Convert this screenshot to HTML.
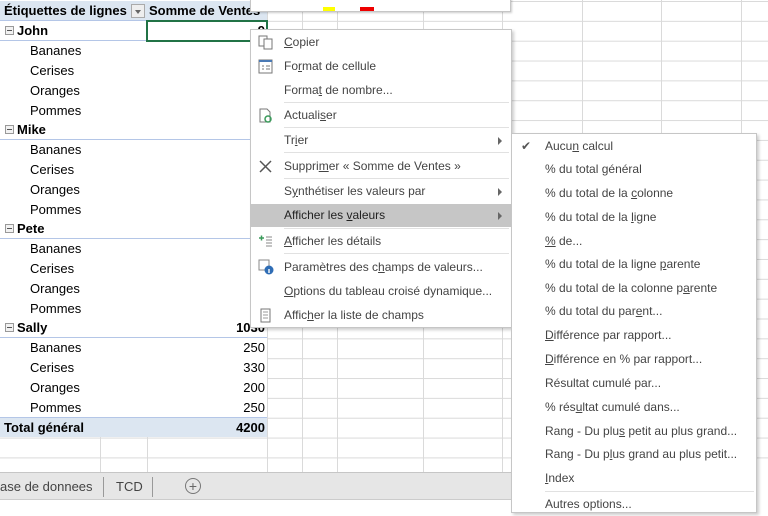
<!DOCTYPE html>
<html><head><meta charset="utf-8"><style>
*{margin:0;padding:0;box-sizing:border-box}
body{width:768px;height:504px;overflow:hidden;background:#fff;font-family:"Liberation Sans",sans-serif;position:relative}
.grid{position:absolute;left:0;top:0;width:768px;height:472px;
background-image:linear-gradient(#dadada 1px,transparent 1px);background-size:100% 19.85px;background-position:0 1px}
.v{position:absolute;top:0;width:1px;height:472px;background:#dadada}
.pt{position:absolute;left:0;top:0;width:267px;background:#fff}
.r{position:absolute;left:0;width:267px;height:19.85px;font-size:13px;line-height:19px;color:#000}
.r .a{position:absolute;left:30px}
.r .b{position:absolute;right:2px}
.r.g .a{left:17px;font-weight:bold}.r.g .b{font-weight:bold}
.r.g{border-bottom:1px solid #b4c6e7}
.mn{position:absolute;left:5px;top:5px;width:9px;height:9px;border:1px solid #999;background:#f2f2f2}
.mn:after{content:"";position:absolute;left:1px;top:3px;width:5px;height:1px;background:#555}
.menu{position:absolute;background:#fff;border:1px solid #c6c6c6;box-shadow:2px 2px 3px rgba(0,0,0,.2);font-size:12px;color:#444}
.it{position:absolute;left:0;right:0;height:23px;line-height:23px}
.it span{position:absolute;left:33px}
.sep{position:absolute;left:33px;right:2px;height:1px;background:#e1e1e1}
.arr{position:absolute;right:9px;top:8px;border-left:4px solid #666;border-top:4px solid transparent;border-bottom:4px solid transparent}
u{text-decoration:underline}
</style></head><body>
<div class="grid"></div>
<div class="v" style="left:267px"></div><div class="v" style="left:302px"></div><div class="v" style="left:337px"></div><div class="v" style="left:423px"></div><div class="v" style="left:502px"></div><div class="v" style="left:582px"></div><div class="v" style="left:661px"></div><div class="v" style="left:741px"></div>
<div class="v" style="left:100px;top:437px;height:35px"></div><div class="v" style="left:147px;top:437px;height:35px"></div>

<div class="pt" style="height:437px">
<div class="r" style="top:1px;background:#dce6f1;font-weight:bold;border-bottom:1px solid #b4c6e7"><span style="position:absolute;left:4px">Étiquettes de lignes</span><span style="position:absolute;left:131px;top:3px;width:14px;height:14px;border:1px solid #aaa;background:#eee"></span><span style="position:absolute;left:135px;top:9px;border-top:4px solid #666;border-left:3px solid transparent;border-right:3px solid transparent"></span><span style="position:absolute;left:149px">Somme de Ventes</span></div>
<div class="r g" style="top:21px"><i class="mn"></i><span class="a">John</span><span class="b">9</span></div>
<div style="position:absolute;left:146px;top:20px;width:122px;height:22px;border:2px solid #217346"></div>
<div class="r" style="top:41px"><span class="a">Bananes</span><span class="b">4</span></div>
<div class="r" style="top:61px"><span class="a">Cerises</span><span class="b">2</span></div>
<div class="r" style="top:81px"><span class="a">Oranges</span><span class="b">1</span></div>
<div class="r" style="top:101px"><span class="a">Pommes</span><span class="b">1</span></div>
<div class="r g" style="top:120px"><i class="mn"></i><span class="a">Mike</span><span class="b">13</span></div>
<div class="r" style="top:140px"><span class="a">Bananes</span><span class="b">2</span></div>
<div class="r" style="top:160px"><span class="a">Cerises</span><span class="b">5</span></div>
<div class="r" style="top:180px"><span class="a">Oranges</span><span class="b">4</span></div>
<div class="r" style="top:200px"><span class="a">Pommes</span><span class="b">1</span></div>
<div class="r g" style="top:219px"><i class="mn"></i><span class="a">Pete</span><span class="b">9</span></div>
<div class="r" style="top:239px"><span class="a">Bananes</span><span class="b">1</span></div>
<div class="r" style="top:259px"><span class="a">Cerises</span><span class="b">3</span></div>
<div class="r" style="top:279px"><span class="a">Oranges</span><span class="b">1</span></div>
<div class="r" style="top:299px"><span class="a">Pommes</span><span class="b">2</span></div>
<div class="r g" style="top:318px"><i class="mn"></i><span class="a">Sally</span><span class="b">1030</span></div>
<div class="r" style="top:338px"><span class="a">Bananes</span><span class="b">250</span></div>
<div class="r" style="top:358px"><span class="a">Cerises</span><span class="b">330</span></div>
<div class="r" style="top:378px"><span class="a">Oranges</span><span class="b">200</span></div>
<div class="r" style="top:398px"><span class="a">Pommes</span><span class="b">250</span></div>
<div class="r" style="top:417px;background:#dce6f1;border-top:1px solid #b4c6e7;font-weight:bold"><span style="position:absolute;left:4px">Total général</span><span class="b">4200</span></div>
</div>

<div style="position:absolute;left:0;top:472px;width:511px;height:28px;background:#e6e6e6;border-top:1px solid #c6c6c6;border-bottom:1px solid #ccc;font-size:13px;color:#444">
<span style="position:absolute;left:0;top:6px">ase de donnees</span>
<span style="position:absolute;left:103px;top:4px;width:1px;height:20px;background:#999"></span>
<span style="position:absolute;left:116px;top:6px">TCD</span>
<span style="position:absolute;left:152px;top:4px;width:1px;height:20px;background:#999"></span>
<span style="position:absolute;left:185px;top:5px;width:16px;height:16px;border:1px solid #777;border-radius:50%;text-align:center;line-height:14px;font-size:14px;color:#666">+</span>
</div>

<div style="position:absolute;left:250px;top:-2px;width:261px;height:14px;background:#fff;border:1px solid #c6c6c6;box-shadow:1px 1px 2px rgba(0,0,0,.2)">
<span style="position:absolute;left:72px;top:8px;width:12px;height:4px;background:#ff0"></span>
<span style="position:absolute;left:109px;top:8px;width:14px;height:4px;background:#e00"></span>
</div>

<div class="menu" style="left:250px;top:29px;width:262px;height:299px">
<div class="it" style="top:1px"><svg style="position:absolute;left:7px;top:4px" width="15" height="15"><rect x="1" y="1" width="8" height="10" fill="#fff" stroke="#777"/><rect x="6" y="4" width="8" height="10" fill="#fff" stroke="#777"/></svg><span><u>C</u>opier</span></div>
<div class="it" style="top:25px"><svg style="position:absolute;left:7px;top:4px" width="15" height="15"><rect x="1" y="1" width="13" height="13" fill="#fff" stroke="#777"/><rect x="1" y="1" width="13" height="2" fill="#4a7ab5"/><path d="M4 7h2M4 10h2M8 7h4M8 10h4" stroke="#777"/></svg><span>Fo<u>r</u>mat de cellule</span></div>
<div class="it" style="top:49px"><span>Forma<u>t</u> de nombre...</span></div>
<div class="sep" style="top:72px"></div>
<div class="it" style="top:74px"><svg style="position:absolute;left:7px;top:4px" width="15" height="15"><path d="M2 1h7l3 3v10H2z" fill="#fff" stroke="#777"/><circle cx="10" cy="11" r="3" fill="none" stroke="#3a9a5a" stroke-width="1.5"/></svg><span>Actuali<u>s</u>er</span></div>
<div class="sep" style="top:97px"></div>
<div class="it" style="top:99px"><span>Tr<u>i</u>er</span><i class="arr"></i></div>
<div class="sep" style="top:122px"></div>
<div class="it" style="top:125px"><svg style="position:absolute;left:7px;top:4px" width="15" height="15"><path d="M2 2l11 11M13 2L2 13" stroke="#555" stroke-width="1.5"/></svg><span>Suppri<u>m</u>er « Somme de Ventes »</span></div>
<div class="sep" style="top:148px"></div>
<div class="it" style="top:150px"><span>S<u>y</u>nthétiser les valeurs par</span><i class="arr"></i></div>
<div class="it" style="top:174px;background:#c6c6c6;color:#222"><span>Afficher les <u>v</u>aleurs</span><i class="arr"></i></div>
<div class="sep" style="top:198px"></div>
<div class="it" style="top:200px"><svg style="position:absolute;left:7px;top:4px" width="15" height="15"><path d="M1 4h5M3.5 1.5v5" stroke="#3a9a5a" stroke-width="1.5"/><path d="M8 3h6M8 6h6M8 9h6M8 12h6" stroke="#888"/></svg><span><u>A</u>fficher les détails</span></div>
<div class="sep" style="top:223px"></div>
<div class="it" style="top:226px"><svg style="position:absolute;left:7px;top:3px" width="16" height="16"><rect x="1" y="1" width="10" height="10" fill="#fff" stroke="#888"/><circle cx="11" cy="11" r="4.5" fill="#2f6db5"/><rect x="10.3" y="10" width="1.4" height="4" fill="#fff"/></svg><span>Paramètres des c<u>h</u>amps de valeurs...</span></div>
<div class="it" style="top:250px"><span><u>O</u>ptions du tableau croisé dynamique...</span></div>
<div class="it" style="top:274px"><svg style="position:absolute;left:9px;top:4px" width="12" height="15"><rect x="1" y="1" width="9" height="13" fill="#fff" stroke="#777"/><path d="M3 4h5M3 7h5M3 10h5" stroke="#999"/></svg><span>Affic<u>h</u>er la liste de champs</span></div>
</div>

<div class="menu" style="left:511px;top:133px;width:246px;height:380px">
<div class="it" style="top:1px"><span style="left:9px;color:#555">✔</span><span>Aucu<u>n</u> calcul</span></div>
<div class="it" style="top:24px"><span>% du total <u>g</u>énéral</span></div>
<div class="it" style="top:48px"><span>% du total de la <u>c</u>olonne</span></div>
<div class="it" style="top:72px"><span>% du total de la <u>l</u>igne</span></div>
<div class="it" style="top:96px"><span><u>%</u> de...</span></div>
<div class="it" style="top:119px"><span>% du total de la ligne <u>p</u>arente</span></div>
<div class="it" style="top:143px"><span>% du total de la colonne p<u>a</u>rente</span></div>
<div class="it" style="top:166px"><span>% du total du par<u>e</u>nt...</span></div>
<div class="it" style="top:190px"><span><u>D</u>ifférence par rapport...</span></div>
<div class="it" style="top:214px"><span><u>D</u>ifférence en % par rapport...</span></div>
<div class="it" style="top:238px"><span>Résultat cumulé par...</span></div>
<div class="it" style="top:262px"><span>% rés<u>u</u>ltat cumulé dans...</span></div>
<div class="it" style="top:286px"><span>Rang - Du plu<u>s</u> petit au plus grand...</span></div>
<div class="it" style="top:309px"><span>Rang - Du p<u>l</u>us grand au plus petit...</span></div>
<div class="it" style="top:333px"><span><u>I</u>ndex</span></div>
<div class="sep" style="top:357px"></div>
<div class="it" style="top:359px"><span>Autres options...</span></div>
</div>
</body></html>
